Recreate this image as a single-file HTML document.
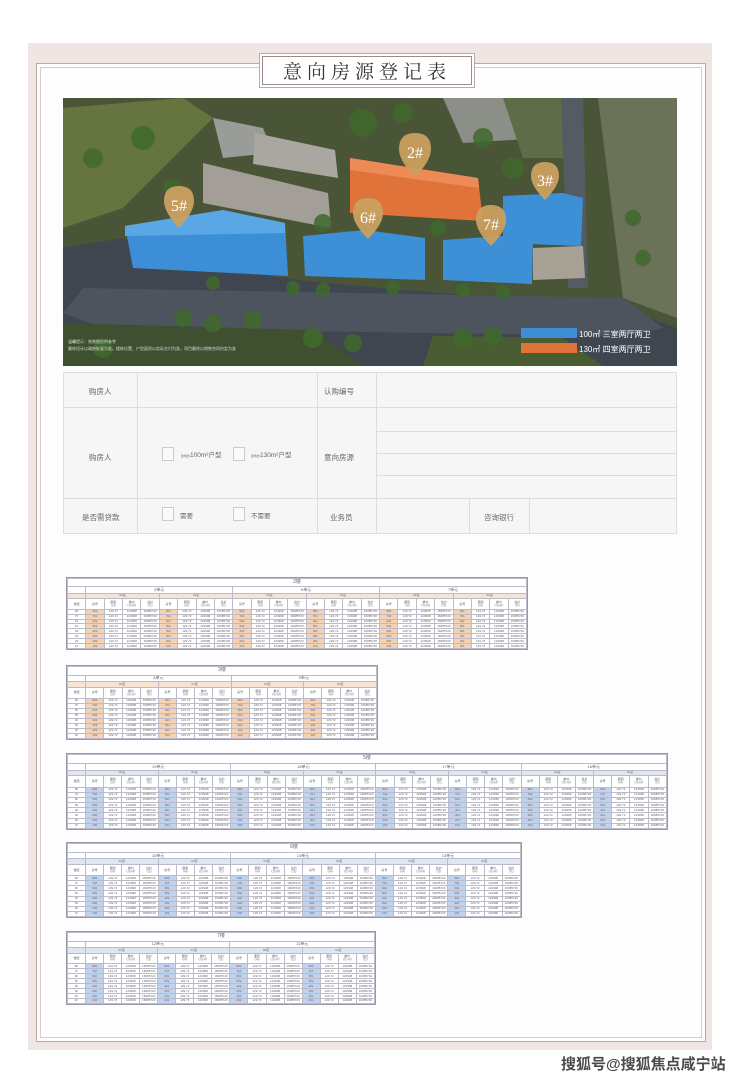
<!DOCTYPE html>
<html><head><meta charset="utf-8">
<style>
*{margin:0;padding:0;box-sizing:border-box}
body{width:740px;height:1079px;background:#fff;position:relative;overflow:hidden;font-family:"Liberation Sans","Noto Sans CJK SC",sans-serif}
.outer{position:absolute;left:28px;top:43px;width:684px;height:1007px;background:#efe6e3}
.inner{position:absolute;left:36px;top:63px;width:670px;height:979px;background:#fdfdfd;border:1px solid #b9aaa2}
.inner2{position:absolute;left:40px;top:67px;width:662px;height:971px;border:1px solid #d9ccc6}
.title{position:absolute;left:262px;top:56px;width:210px;height:29px;background:#fff;border:1px solid #9c8c84;outline:2px solid #fff;box-shadow:0 0 0 3px #b9aaa2;font-family:"Noto Serif CJK SC",serif;font-size:19px;letter-spacing:5px;color:#333;text-align:center;line-height:27px}
.aerial{position:absolute;left:63px;top:98px}
.form{position:absolute;left:63px;top:372px;width:614px;height:162px;background:#f6f6f6;border:1px solid #ddd}
.form div{position:absolute;font-size:7.5px;color:#666}
.ln{background:#dcdcdc}
.cb{width:12px;height:14px;border:1px solid #ccc;background:#fafafa}
.tb{position:absolute;border:1px solid #99a;font-size:3px;color:#666;background:#fff}
.tb table{border-collapse:collapse;width:100%;height:100%;table-layout:fixed}
.tb td{border:1px solid #bbc;text-align:center;overflow:hidden;white-space:nowrap;line-height:1;padding:0}
.wm{position:absolute;left:561px;top:1053px;font-size:15px;font-weight:bold;color:#4a4a4a}
</style></head><body>
<div class="outer"></div>
<div class="inner"></div>
<div class="inner2"></div>
<div class="title">意向房源登记表</div>

<svg class="aerial" width="614" height="268" viewBox="0 0 614 268">
<rect width="614" height="268" fill="#4a5538"/>
<polygon points="0,10 120,0 150,20 60,110 0,130" fill="#66743f"/>
<polygon points="380,0 470,0 480,40 400,45" fill="#8b8f88"/>
<polygon points="440,0 520,0 520,60 460,60" fill="#5f6c48"/>
<polygon points="535,0 614,0 614,220 560,200" fill="#6a7258"/>
<polygon points="0,150 60,140 150,170 260,185 560,210 614,230 614,268 0,268" fill="#3f4650"/>
<polygon points="20,190 560,200 600,230 560,238 40,230 0,215" fill="#4d545d"/>
<polygon points="0,225 250,232 300,268 0,268" fill="#3f5030"/>
<polygon points="370,238 500,240 540,268 360,268" fill="#4a5c32"/>
<polygon points="498,0 520,0 525,190 505,190" fill="#555b63"/>
<polygon points="150,20 200,30 210,55 160,60" fill="#9a9c9a"/>
<polygon points="140,65 265,95 268,130 140,105" fill="#a39f98"/>
<polygon points="192,35 272,52 275,80 190,66" fill="#aaa6a0"/>
<g fill="#3f6a2c" opacity=".85">
<circle cx="30" cy="60" r="10"/><circle cx="80" cy="40" r="12"/><circle cx="110" cy="90" r="9"/><circle cx="300" cy="25" r="14"/><circle cx="340" cy="15" r="10"/><circle cx="420" cy="40" r="10"/><circle cx="450" cy="70" r="11"/><circle cx="260" cy="125" r="9"/><circle cx="280" cy="140" r="8"/><circle cx="375" cy="130" r="8"/><circle cx="230" cy="190" r="7"/><circle cx="260" cy="192" r="7"/><circle cx="330" cy="190" r="7"/><circle cx="400" cy="192" r="7"/><circle cx="440" cy="194" r="7"/><circle cx="150" cy="185" r="7"/><circle cx="120" cy="220" r="9"/><circle cx="150" cy="225" r="9"/><circle cx="190" cy="222" r="9"/><circle cx="250" cy="240" r="10"/><circle cx="290" cy="245" r="9"/><circle cx="400" cy="240" r="10"/><circle cx="430" cy="238" r="9"/><circle cx="570" cy="120" r="8"/><circle cx="580" cy="160" r="8"/><circle cx="40" cy="250" r="10"/>
</g>
<polygon points="287,60 415,80 420,123 287,115" fill="#e0733a"/>
<polygon points="287,60 415,80 416,90 287,72" fill="#ee8a55"/>
<polygon points="62,128 160,112 222,125 225,178 70,170" fill="#3c8fd6"/>
<polygon points="62,128 160,112 222,125 222,135 62,138" fill="#5aa7e6"/>
<polygon points="240,138 302,132 362,140 362,182 242,178" fill="#3d8fd6"/>
<polygon points="380,142 440,138 470,145 469,186 380,182" fill="#3d8fd6"/>
<polygon points="440,98 500,95 520,100 518,148 440,145" fill="#3d8fd6"/>
<polygon points="470,150 520,148 522,180 470,182" fill="#a8a196"/>
<g fill="#caa060" opacity=".95">
<path d="M352,35 q-16,0 -16,16 q0,12 16,28 q16,-16 16,-28 q0,-16 -16,-16z"/>
<path d="M482,64 q-14,0 -14,14 q0,10 14,24 q14,-14 14,-24 q0,-14 -14,-14z"/>
<path d="M116,88 q-15,0 -15,15 q0,11 15,27 q15,-16 15,-27 q0,-15 -15,-15z"/>
<path d="M305,100 q-15,0 -15,15 q0,11 15,26 q15,-15 15,-26 q0,-15 -15,-15z"/>
<path d="M428,107 q-15,0 -15,15 q0,11 15,26 q15,-15 15,-26 q0,-15 -15,-15z"/>
</g>
<g fill="#fff" font-family="Liberation Serif,serif" font-size="16" text-anchor="middle">
<text x="352" y="60">2#</text><text x="482" y="88">3#</text><text x="116" y="113">5#</text><text x="305" y="125">6#</text><text x="428" y="132">7#</text>
</g>
<rect x="458" y="230" width="56" height="10" fill="#3c8fd6"/>
<rect x="458" y="245" width="56" height="10" fill="#e0733a"/>
<text x="516" y="239" fill="#fff" font-size="8">100㎡ 三室两厅两卫</text>
<text x="516" y="254" fill="#fff" font-size="8">130㎡ 四室两厅两卫</text>
<text x="5" y="245" fill="#ddd" font-size="4">温馨提示：效果图仅供参考</text>
<text x="5" y="252" fill="#ddd" font-size="4">最终设计以政府批复为准，楼栋位置、户型面积以实际交付为准，项目最终以销售合同约定为准</text>
</svg>

<div class="form">
<div class="ln" style="left:73px;top:0;width:1px;height:160px"></div>
<div class="ln" style="left:253px;top:0;width:1px;height:160px"></div>
<div class="ln" style="left:312px;top:0;width:1px;height:160px"></div>
<div class="ln" style="left:405px;top:125px;width:1px;height:35px"></div>
<div class="ln" style="left:465px;top:125px;width:1px;height:35px"></div>
<div class="ln" style="left:0;top:34px;width:612px;height:1px"></div>
<div class="ln" style="left:312px;top:58px;width:300px;height:1px"></div>
<div class="ln" style="left:312px;top:80px;width:300px;height:1px"></div>
<div class="ln" style="left:312px;top:102px;width:300px;height:1px"></div>
<div class="ln" style="left:0;top:125px;width:612px;height:1px"></div>
<div style="left:25px;top:13px">购房人</div>
<div style="left:25px;top:79px">购房人</div>
<div style="left:18px;top:139px">是否需贷款</div>
<div style="left:260px;top:13px">认购编号</div>
<div style="left:260px;top:79px">意向房源</div>
<div style="left:266px;top:139px">业务员</div>
<div style="left:420px;top:139px">咨询银行</div>
<div class="cb" style="left:98px;top:74px"></div>
<div style="left:117px;top:76px;font-size:6.5px"><span style="font-size:3px">建筑约</span>100m²户型</div>
<div class="cb" style="left:169px;top:74px"></div>
<div style="left:187px;top:76px;font-size:6.5px"><span style="font-size:3px">建筑约</span>130m²户型</div>
<div class="cb" style="left:98px;top:134px"></div>
<div style="left:116px;top:137px;font-size:6.5px">需要</div>
<div class="cb" style="left:169px;top:134px"></div>
<div style="left:187px;top:137px;font-size:6.5px">不需要</div>
</div>

<div id="t1" class="tb" style="left:66px;top:577px;width:462px;height:73px"></div>
<div id="t2" class="tb" style="left:66px;top:665px;width:312px;height:75px"></div>
<div id="t3" class="tb" style="left:66px;top:753px;width:602px;height:77px"></div>
<div id="t4" class="tb" style="left:66px;top:842px;width:456px;height:76px"></div>
<div id="t5" class="tb" style="left:66px;top:931px;width:310px;height:74px"></div>

<div class="wm">搜狐号@搜狐焦点咸宁站</div>

<script>
function build(id,title,units,hl,tint){
  var n=units.length, cols=1+n*8, h='<table>';
  h+='<tr style="height:12%"><td colspan="'+cols+'" style="font-size:5px">'+title+'</td></tr>';
  h+='<tr style="height:9%"><td></td>';
  units.forEach(function(u){h+='<td colspan="8" style="font-size:4px">'+u+'</td>';});
  h+='</tr><tr style="height:8%;background:'+tint+'"><td></td>';
  for(var i=0;i<n*2;i++)h+='<td colspan="4">'+(i%2?'01室':'02室')+'</td>';
  h+='</tr><tr style="height:15%"><td>楼层</td>';
  for(var i=0;i<n*2;i++)h+='<td>房号</td><td>面积<br>(㎡)</td><td>单价<br>(元/㎡)</td><td>总价<br>(元)</td>';
  h+='</tr>';
  var fl=['9F','7F','6F','5F','4F','3F','2F','1F'];
  fl.forEach(function(f){
    h+='<tr><td>'+f+'</td>';
    for(var i=0;i<n*2;i++)h+='<td style="background:'+hl+'">'+f.replace('F','0'+(i%2?'1':'2'))+'</td><td>129.72</td><td>123998</td><td>16085720</td>';
    h+='</tr>';
  });
  h+='</table>';
  document.getElementById(id).innerHTML=h;
}
build('t1','2楼',['5单元','6单元','7单元'],'#f3d2b5','#f6e3d4');
build('t2','3楼',['8单元','9单元'],'#f3d2b5','#f6e3d4');
build('t3','5楼',['19单元','18单元','17单元','16单元'],'#bfd3ee','#dfe6f2');
build('t4','6楼',['15单元','14单元','13单元'],'#bfd3ee','#dfe6f2');
build('t5','7楼',['12单元','11单元'],'#bfd3ee','#dfe6f2');
</script>
</body></html>
